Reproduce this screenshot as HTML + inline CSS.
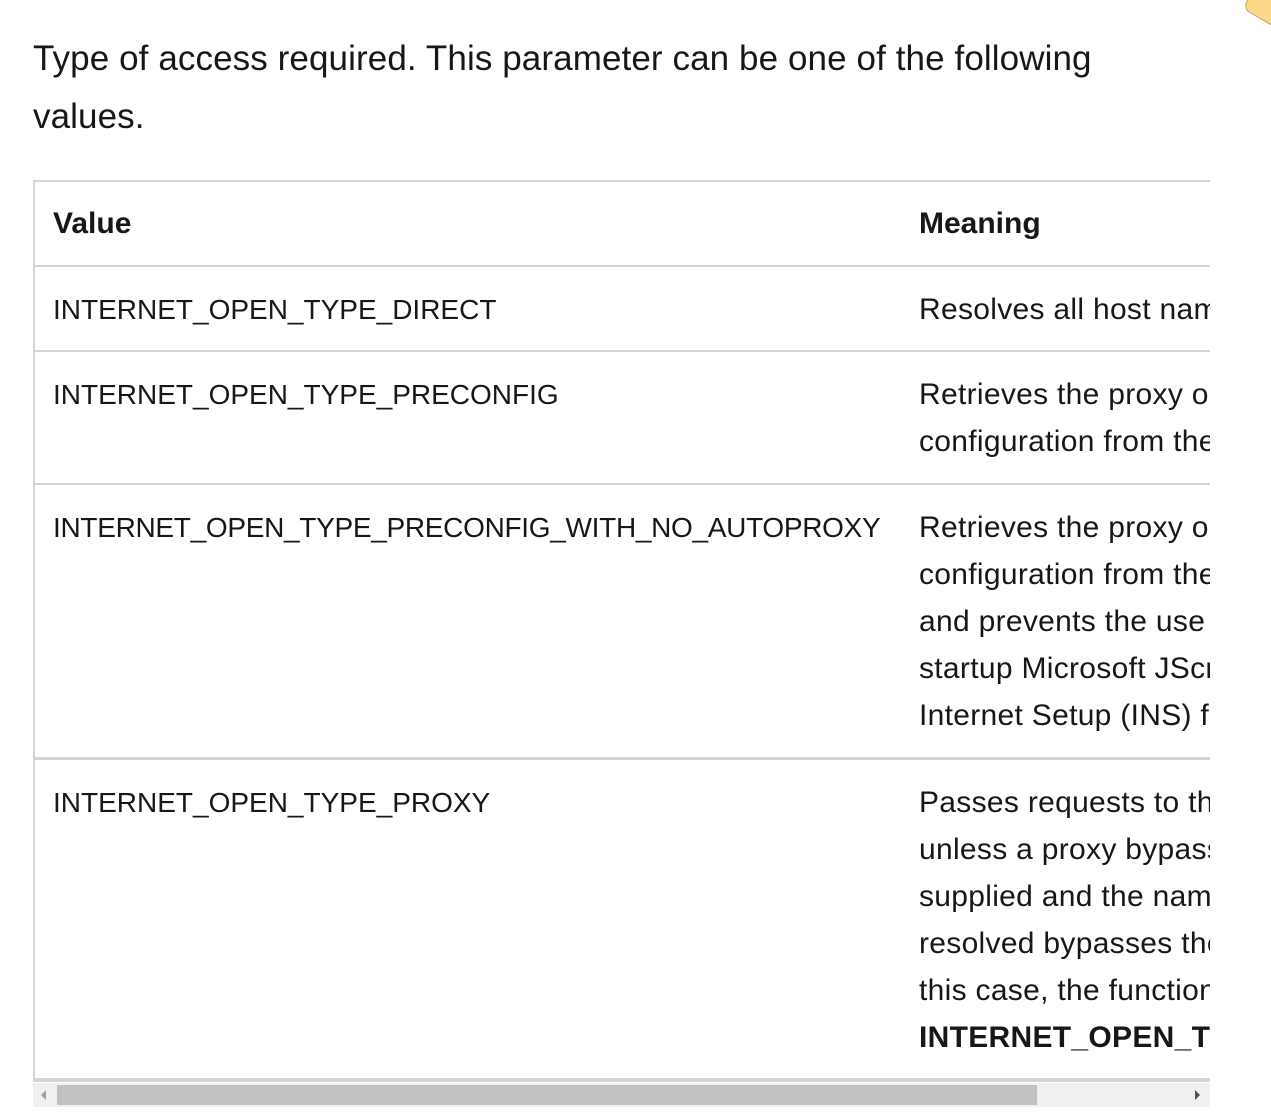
<!DOCTYPE html>
<html><head><meta charset="utf-8"><style>
html,body{margin:0;padding:0;background:#fff;width:1271px;height:1119px;overflow:hidden;position:relative;font-family:"Liberation Sans",sans-serif;color:#171717}
.p{position:absolute;left:33px;font-size:35px;line-height:58px;white-space:nowrap;letter-spacing:0.1px}
.clip{position:absolute;left:33px;top:180px;width:1177px;height:902px;overflow:hidden}
.hl{position:absolute;left:0;width:1177px;height:2px;background:#d4d4d4}
.vl{position:absolute;left:0;top:0;width:2px;height:902px;background:#d4d4d4}
.t{position:absolute;font-size:28px;line-height:47px;white-space:nowrap}
.m{font-size:30px;letter-spacing:0.3px}
.b{font-weight:bold}
.sb{position:absolute;left:33px;top:1083px;width:1177px;height:24px;background:#f0f0f0}
.th{position:absolute;left:24px;top:2px;width:980px;height:20px;background:#c1c1c1}
.badge{position:absolute;left:1250px;top:-20px;width:40px;height:40px;border-radius:8px;background:#fcd98a;border:1px solid #c79a6a;transform:rotate(30deg)}
</style></head><body>
<div class="badge"></div>
<div class="p" style="top:30px">Type of access required. This parameter can be one of the following</div>
<div class="p" style="top:88px">values.</div>
<div class="clip">
<div class="hl" style="top:0"></div>
<div class="hl" style="top:85px"></div>
<div class="hl" style="top:170px"></div>
<div class="hl" style="top:303px"></div>
<div class="hl" style="top:577px;height:3px"></div>
<div class="hl" style="top:898px;height:4px"></div>
<div class="vl"></div>
<div class="t b" style="left:20px;top:20px;font-size:30px">Value</div>
<div class="t b" style="left:886px;top:20px;font-size:30px">Meaning</div>
<div class="t" style="left:20px;top:106px">INTERNET_OPEN_TYPE_DIRECT</div>
<div class="t m" style="left:886px;top:106px">Resolves all host names</div>
<div class="t" style="left:20px;top:191px">INTERNET_OPEN_TYPE_PRECONFIG</div>
<div class="t m" style="left:886px;top:191px">Retrieves the proxy or</div>
<div class="t m" style="left:886px;top:238px">configuration from the</div>
<div class="t" style="left:20px;top:324px;letter-spacing:-0.3px">INTERNET_OPEN_TYPE_PRECONFIG_WITH_NO_AUTOPROXY</div>
<div class="t m" style="left:886px;top:324px">Retrieves the proxy or</div>
<div class="t m" style="left:886px;top:371px">configuration from the</div>
<div class="t m" style="left:886px;top:418px">and prevents the use</div>
<div class="t m" style="left:886px;top:465px">startup Microsoft JScript</div>
<div class="t m" style="left:886px;top:512px">Internet Setup (INS) file</div>
<div class="t" style="left:20px;top:599px">INTERNET_OPEN_TYPE_PROXY</div>
<div class="t m" style="left:886px;top:599px">Passes requests to the</div>
<div class="t m" style="left:886px;top:646px">unless a proxy bypass</div>
<div class="t m" style="left:886px;top:693px">supplied and the name</div>
<div class="t m" style="left:886px;top:740px">resolved bypasses the</div>
<div class="t m" style="left:886px;top:787px">this case, the function</div>
<div class="t b m" style="left:886px;top:834px">INTERNET_OPEN_TYPE</div>
</div>
<div class="sb"><div class="th"></div>
<div style="position:absolute;left:8px;top:7px;width:0;height:0;border-top:5px solid transparent;border-bottom:5px solid transparent;border-right:5px solid #a0a0a0"></div>
<div style="position:absolute;left:1162px;top:7px;width:0;height:0;border-top:5px solid transparent;border-bottom:5px solid transparent;border-left:5px solid #505050"></div>
</div>
</body></html>
